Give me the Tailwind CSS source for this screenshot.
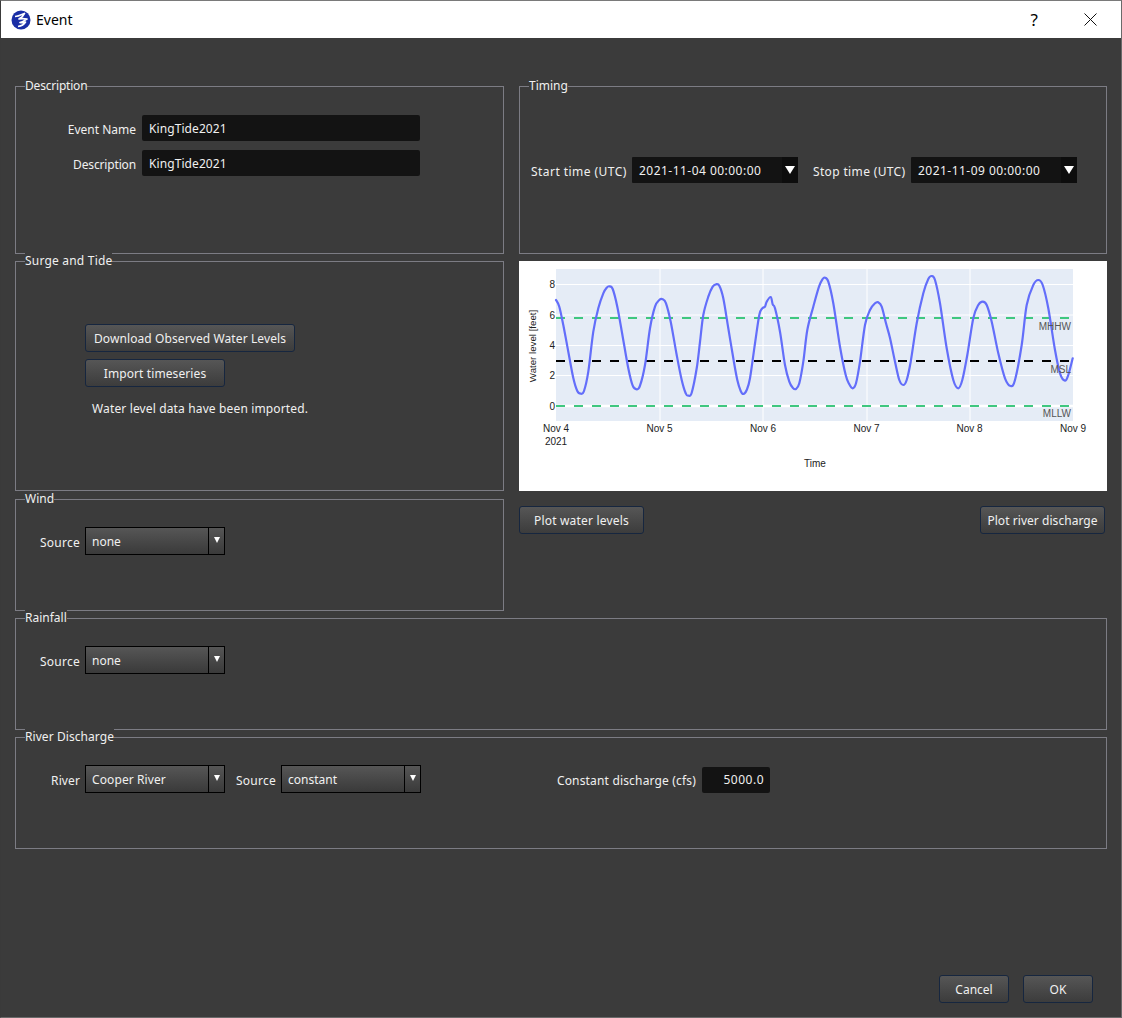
<!DOCTYPE html>
<html lang="en">
<head>
  <meta charset="UTF-8" />
  <title>Event</title>
  <script src="https://cdn.jsdelivr.net/npm/@tailwindcss/browser@4"></script>
</head>
<body class="bg-[#3b3b3b]">
  <div class="flex flex-col w-[1122px] h-[1018px] bg-[#3b3b3b] border-t border-l border-r border-b border-t-[#7a7a7a] border-l-[#3a3a3a] border-r-[#6a6a6a] border-b-[#6a6a6a] text-[12px] leading-[16px] text-[#f0f0f0] font-['Noto_Sans',sans-serif] overflow-hidden">

    <!-- Title bar -->
    <div class="flex items-center h-[37px] shrink-0 bg-white text-black pl-[10px]">
      <svg width="20" height="20" viewBox="0 0 20 20" class="shrink-0">
        <circle cx="10" cy="10" r="9.5" fill="#1a2ea6"/>
        <path d="M4 6.5 C7 6.5 10 5 13.5 3.5 C12.5 6 10.5 7.5 8 9 C10 8.5 13 8.5 16 9 C13.5 10.5 11.5 12 9 12.5 C11 13 13 12.5 14.5 12 C13 14.5 10 16 7 16.5" fill="none" stroke="#fff" stroke-width="1.7" stroke-linejoin="round"/>
      </svg>
      <span class="ml-[5px] text-[14px] leading-[20px]">Event</span>
      <span class="ml-auto text-[17px] leading-[20px]">?</span>
      <svg width="13" height="13" viewBox="0 0 13 13" class="ml-[46px] mr-[24px]">
        <path d="M0.5 0.5 L12.5 12.5 M12.5 0.5 L0.5 12.5" stroke="#111" stroke-width="1" fill="none"/>
      </svg>
    </div>

    <!-- Dialog body -->
    <div class="flex flex-col flex-1 px-[14px] pt-[48px] pb-[14px]">
      <div class="flex gap-x-[15px]">
        <!-- Left column -->
        <div class="flex flex-col w-[489px]">
          <div class="relative h-[168px] border border-[#7c7c84] pt-[28px]">
            <span class="absolute left-[9px] top-[-9px] h-[16px] bg-[#3b3b3b] whitespace-nowrap tracking-[-0.2px]">Description</span>
            <div class="grid grid-cols-[120px_278px] gap-x-[6px] gap-y-[9px] items-center">
              <span class="text-right whitespace-nowrap pt-[3px]">Event Name</span>
              <div class="h-[26px] bg-[#131313] rounded-[2px] pl-[7px] pt-[2px] flex items-center tracking-[0.08px]">KingTide2021</div>
              <span class="text-right whitespace-nowrap pt-[3px] tracking-[-0.15px]">Description</span>
              <div class="h-[26px] bg-[#131313] rounded-[2px] pl-[7px] pt-[2px] flex items-center tracking-[0.08px]">KingTide2021</div>
            </div>
          </div>

          <div class="relative h-[230px] mt-[7px] border border-[#7c7c84] pt-[62px] pl-[69px]">
            <span class="absolute left-[9px] top-[-9px] h-[16px] bg-[#3b3b3b] whitespace-nowrap tracking-[0.2px]">Surge and Tide</span>
            <button class="flex items-center justify-center w-[210px] h-[28px] pt-[2px] rounded-[3px] border border-[#16263f] bg-gradient-to-b from-[#565656] to-[#3c3c3c] whitespace-nowrap tracking-[0.1px]">Download Observed Water Levels</button>
            <button class="flex items-center justify-center w-[140px] h-[28px] pt-[2px] mt-[7px] rounded-[3px] border border-[#16263f] bg-gradient-to-b from-[#565656] to-[#3c3c3c] whitespace-nowrap tracking-[0.1px]">Import timeseries</button>
            <p class="mt-[14px] ml-[7px] whitespace-nowrap tracking-[0.14px]">Water level data have been imported.</p>
          </div>

          <div class="relative h-[112px] mt-[8px] border border-[#7c7c84] pt-[27px]">
            <span class="absolute left-[9px] top-[-9px] h-[16px] bg-[#3b3b3b] whitespace-nowrap">Wind</span>
            <div class="flex items-center gap-x-[5px]">
              <span class="w-[64px] text-right pt-[3px] tracking-[0.25px]">Source</span>
              <div class="flex w-[140px] h-[28px] border border-black bg-gradient-to-b from-[#565656] to-[#3a3a3a]">
                <span class="flex-1 pl-[6px] leading-[27px]">none</span>
                <span class="flex items-center justify-center w-[16px] border-l border-black"><span class="w-0 h-0 border-l-[3.5px] border-r-[3.5px] border-t-[6px] border-l-transparent border-r-transparent border-t-white mb-[3px]"></span></span>
              </div>
            </div>
          </div>
        </div>

        <!-- Right column -->
        <div class="flex flex-col w-[588px]">
          <div class="relative h-[168px] border border-[#7c7c84] pt-[70px] pl-[11px]">
            <span class="absolute left-[9px] top-[-9px] h-[16px] bg-[#3b3b3b] whitespace-nowrap">Timing</span>
            <div class="flex items-start">
              <span class="w-[95px] h-[26px] pt-[3px] flex items-center whitespace-nowrap tracking-[0.45px]">Start time (UTC)</span>
              <div class="flex ml-[6px] w-[166px] h-[26px] bg-[#131313] rounded-[1px]">
                <span class="flex-1 pl-[7px] pt-[1px] leading-[26px] tracking-[0.47px] whitespace-nowrap">2021-11-04 00:00:00</span>
                <span class="flex items-start justify-center w-[16px] bg-[#0d0d0d] pt-[9px]"><span class="w-0 h-0 border-l-[5px] border-r-[5px] border-t-[8px] border-l-transparent border-r-transparent border-t-white"></span></span>
              </div>
              <span class="w-[92px] h-[26px] pt-[3px] ml-[15px] flex items-center whitespace-nowrap tracking-[0.35px]">Stop time (UTC)</span>
              <div class="flex ml-[6px] w-[166px] h-[26px] bg-[#131313] rounded-[1px]">
                <span class="flex-1 pl-[7px] pt-[1px] leading-[26px] tracking-[0.47px] whitespace-nowrap">2021-11-09 00:00:00</span>
                <span class="flex items-start justify-center w-[16px] bg-[#0d0d0d] pt-[9px]"><span class="w-0 h-0 border-l-[5px] border-r-[5px] border-t-[8px] border-l-transparent border-r-transparent border-t-white"></span></span>
              </div>
            </div>
          </div>

          <!-- Water level plot, coordinates in page pixels -->
          <svg width="588" height="230" viewBox="519 261 588 230" class="block mt-[7px] bg-white shrink-0" font-family="Liberation Sans, Arial, sans-serif" font-size="10">
            <rect x="556" y="269" width="517" height="152" fill="#e5ecf6"/>
            <g stroke="#fff" stroke-width="1" fill="none">
              <path d="M556 284.5H1073M556 315H1073M556 345.5H1073M556 375.5H1073"/>
              <path d="M660 269V421M763 269V421M867 269V421M970 269V421"/>
              <path d="M556 406H1073" stroke-width="2.5"/>
            </g>
            <path d="M556 318H1069" stroke="#3fc77f" stroke-width="2" stroke-dasharray="9 9" fill="none"/>
            <path d="M556 361H1069" stroke="#000" stroke-width="2" stroke-dasharray="9 9" fill="none"/>
            <path d="M556 406H1069" stroke="#3fc77f" stroke-width="2" stroke-dasharray="9 9" fill="none"/>
            <path id="waterLevel" fill="none" stroke="#636efa" stroke-width="2.2" stroke-linejoin="round" stroke-linecap="round"/>
            <g fill="#222" text-anchor="end">
              <text x="555" y="288">8</text>
              <text x="555" y="319">6</text>
              <text x="555" y="349">4</text>
              <text x="555" y="379">2</text>
              <text x="555" y="410">0</text>
            </g>
            <g fill="#222" text-anchor="middle">
              <text x="556" y="432">Nov 4</text>
              <text x="556" y="445">2021</text>
              <text x="659.5" y="432">Nov 5</text>
              <text x="763" y="432">Nov 6</text>
              <text x="866.5" y="432">Nov 7</text>
              <text x="969.5" y="432">Nov 8</text>
              <text x="1073" y="432">Nov 9</text>
              <text x="815" y="467">Time</text>
              <text transform="translate(536 346) rotate(-90)" font-size="9.7">Water level [feet]</text>
            </g>
            <g fill="#555" text-anchor="end">
              <text x="1071" y="329.5">MHHW</text>
              <text x="1071" y="373">MSL</text>
              <text x="1071" y="417">MLLW</text>
            </g>
          </svg>

          <div class="flex justify-between mt-[15px] pr-[2px]">
            <button class="flex items-center justify-center w-[125px] h-[28px] pt-[2px] rounded-[3px] border border-[#16263f] bg-gradient-to-b from-[#565656] to-[#3c3c3c] whitespace-nowrap tracking-[0.2px]">Plot water levels</button>
            <button class="flex items-center justify-center w-[125px] h-[28px] pt-[2px] rounded-[3px] border border-[#16263f] bg-gradient-to-b from-[#565656] to-[#3c3c3c] whitespace-nowrap tracking-[0.05px]">Plot river discharge</button>
          </div>
        </div>
      </div>

      <!-- Full width groups -->
      <div class="relative h-[112px] mt-[7px] border border-[#7c7c84] pt-[27px]">
        <span class="absolute left-[9px] top-[-9px] h-[16px] bg-[#3b3b3b] whitespace-nowrap">Rainfall</span>
        <div class="flex items-center gap-x-[5px]">
          <span class="w-[64px] text-right pt-[3px] tracking-[0.25px]">Source</span>
          <div class="flex w-[140px] h-[28px] border border-black bg-gradient-to-b from-[#565656] to-[#3a3a3a]">
            <span class="flex-1 pl-[6px] leading-[27px]">none</span>
            <span class="flex items-center justify-center w-[16px] border-l border-black"><span class="w-0 h-0 border-l-[3.5px] border-r-[3.5px] border-t-[6px] border-l-transparent border-r-transparent border-t-white mb-[3px]"></span></span>
          </div>
        </div>
      </div>

      <div class="relative h-[112px] mt-[7px] border border-[#7c7c84] pt-[27px]">
        <span class="absolute left-[9px] top-[-9px] h-[16px] bg-[#3b3b3b] whitespace-nowrap tracking-[0.07px]">River Discharge</span>
        <div class="flex items-center">
          <span class="w-[64px] text-right pt-[3px] tracking-[0.1px]">River</span>
          <div class="flex ml-[5px] w-[140px] h-[28px] border border-black bg-gradient-to-b from-[#565656] to-[#3a3a3a]">
            <span class="flex-1 pl-[6px] leading-[27px] tracking-[0.1px]">Cooper River</span>
            <span class="flex items-center justify-center w-[16px] border-l border-black"><span class="w-0 h-0 border-l-[3.5px] border-r-[3.5px] border-t-[6px] border-l-transparent border-r-transparent border-t-white mb-[3px]"></span></span>
          </div>
          <span class="w-[40px] ml-[11px] text-right pt-[3px] tracking-[0.25px]">Source</span>
          <div class="flex ml-[5px] w-[140px] h-[28px] border border-black bg-gradient-to-b from-[#565656] to-[#3a3a3a]">
            <span class="flex-1 pl-[6px] leading-[27px]">constant</span>
            <span class="flex items-center justify-center w-[16px] border-l border-black"><span class="w-0 h-0 border-l-[3.5px] border-r-[3.5px] border-t-[6px] border-l-transparent border-r-transparent border-t-white mb-[3px]"></span></span>
          </div>
          <span class="w-[140px] ml-[135px] text-right whitespace-nowrap mt-[4px] tracking-[0.17px]">Constant discharge (cfs)</span>
          <div class="ml-[6px] w-[68px] h-[26px] mt-[2px] bg-[#131313] rounded-[2px] pr-[6px] flex items-center justify-end tracking-[0.5px]">5000.0</div>
        </div>
      </div>

      <!-- Dialog buttons -->
      <div class="flex justify-end gap-x-[14px] mt-auto pr-[14px]">
        <button class="flex items-center justify-center w-[70px] h-[28px] pt-[2px] rounded-[3px] border border-[#16263f] bg-gradient-to-b from-[#565656] to-[#3c3c3c]">Cancel</button>
        <button class="flex items-center justify-center w-[70px] h-[28px] pt-[2px] rounded-[3px] border border-[#16263f] bg-gradient-to-b from-[#565656] to-[#3c3c3c]">OK</button>
      </div>
    </div>
  </div>

  <script>
    // Traced water level curve, page pixels, smoothed into a catmull-rom path
    const pts = [[556,300],[559.3,306.7],[563.3,325],[568.3,351.7],[573.3,378],[577.3,391],[580.7,393.7],[584,391],[588.3,371.7],[593.3,331.7],[598.3,308.3],[603.3,293.3],[606.7,287.7],[609.3,286.3],[612.7,289],[617.3,306.7],[622.7,336.7],[628.3,368.3],[632.7,385.7],[636.7,389.3],[640,385.7],[645,365],[650,328.3],[655,306.7],[659.3,300],[662.7,299.3],[666,303.3],[670.7,321.7],[676.7,355],[681.7,380],[685.7,393.3],[688.3,395.7],[691.7,392.7],[696.7,368.3],[700,342],[703.3,315],[708.3,296.7],[712.7,286.7],[716,284.3],[719.3,285.7],[723.3,298.3],[728.3,328.3],[733.3,358.3],[737.3,380],[740.7,391],[743.3,394],[746.7,390],[750,378.3],[755,343.3],[759.3,315],[762.3,308.3],[765,306.7],[766.7,301.7],[770.7,297],[772.7,304.3],[775,308.3],[780,331.7],[785,365],[789.3,381.7],[792.7,387.7],[796,389],[799.3,383.3],[803.3,361.7],[807.3,330],[813.3,306.7],[819,286.7],[822.7,279],[825,277.7],[828.3,281.7],[833.3,303.3],[840,346.7],[845.7,375],[849.3,384.3],[852.7,388.3],[856,383.3],[860,361.7],[865,325],[870,310],[875,303.3],[878.3,302.3],[881.7,306.7],[886,323.3],[890,338],[895,361.7],[899.3,380],[903.3,385],[906.7,380],[910.7,361.7],[916.7,323.3],[923.3,293.3],[928.3,279],[931.7,276],[935,280],[940,303.3],[946.7,348.3],[953.3,380],[958.3,388.3],[962.3,380],[967.3,355],[973.3,318.3],[978.3,305],[982.7,301.7],[986.7,305],[991.7,321.7],[998.3,353.3],[1005,378.3],[1010.7,386],[1015,380],[1021.7,345],[1026.7,305],[1033.3,285],[1038.3,280],[1042.7,285],[1048.3,308.3],[1055,350],[1060,373.3],[1065,380.7],[1068.3,375],[1072.7,358.3]];
    let d = 'M' + pts[0].join(' ');
    for (let i = 0; i < pts.length - 1; i++) {
      const p0 = pts[Math.max(i - 1, 0)], p1 = pts[i], p2 = pts[i + 1], p3 = pts[Math.min(i + 2, pts.length - 1)];
      const c1 = [p1[0] + (p2[0] - p0[0]) / 6, p1[1] + (p2[1] - p0[1]) / 6];
      const c2 = [p2[0] - (p3[0] - p1[0]) / 6, p2[1] - (p3[1] - p1[1]) / 6];
      d += 'C' + c1.join(' ') + ' ' + c2.join(' ') + ' ' + p2.join(' ');
    }
    document.getElementById('waterLevel').setAttribute('d', d);
  </script>
</body>
</html>
